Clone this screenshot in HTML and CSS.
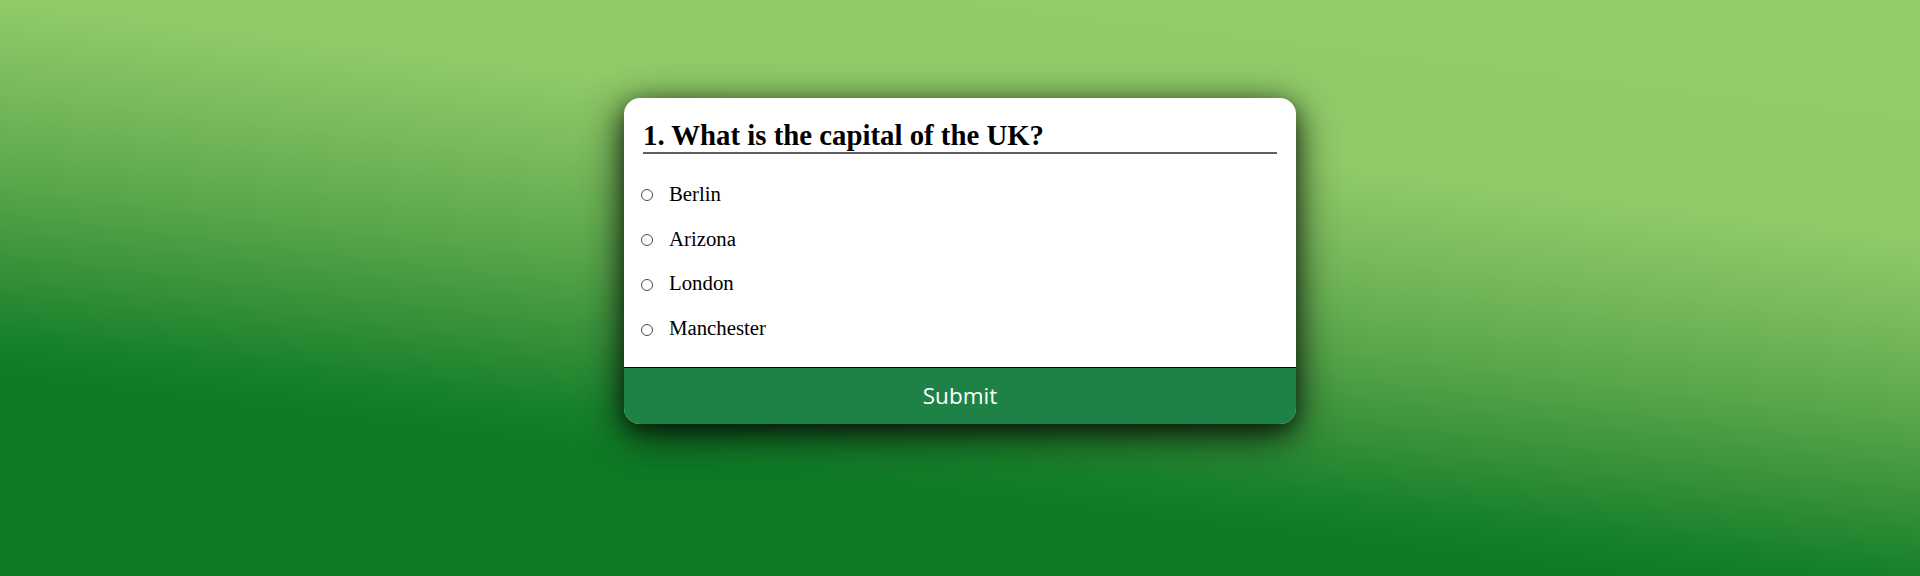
FILE: index.html
```html
<!DOCTYPE html>
<html lang="en">
<head>
<meta charset="utf-8">
<title>Quiz</title>
<link rel="stylesheet" href="styles.css">
</head>
<body>
<div class="quiz">
  <div class="quiz-header">
    <h2 class="question">1. What is the capital of the UK?</h2>
    <ul class="answers">
      <li class="answer"><input type="radio" name="answer" id="a"><label for="a">Berlin</label></li>
      <li class="answer"><input type="radio" name="answer" id="b"><label for="b">Arizona</label></li>
      <li class="answer"><input type="radio" name="answer" id="c"><label for="c">London</label></li>
      <li class="answer"><input type="radio" name="answer" id="d"><label for="d">Manchester</label></li>
    </ul>
  </div>
  <button class="submit" type="button">Submit</button>
</div>
</body>
</html>
```

FILE: styles.css
```css
html, body {
  height: 100%;
}

body {
  margin: 0;
  overflow: hidden;
  font-family: "Liberation Serif", "Times New Roman", serif;
  background: linear-gradient(187deg,
    #92cd6a 0%,
    #90cb68 29%,
    #78ba5c 40%,
    #58a54a 52%,
    #338f38 63%,
    #16802a 71%,
    #0e7a24 76%,
    #0e7a24 100%);
}

.quiz {
  width: 672px;
  margin: 98px auto 0;
  background: #ffffff;
  border-radius: 16px;
  overflow: hidden;
  box-shadow: 0 10px 40px rgba(0, 0, 0, 0.85), 0 6px 18px rgba(0, 0, 0, 0.35);
}

.quiz-header {
  padding: 20.5px 19px 0;
}

.question {
  margin: 0;
  padding: 0;
  font-size: 28.8px;
  font-weight: bold;
  line-height: normal;
  color: #000;
  border-bottom: 2px solid #5e5e5e;
}

.answers {
  list-style: none;
  margin: 0;
  padding: 18px 0 16.5px;
}

.answer {
  display: flex;
  align-items: center;
  padding: 10.4px 0;
  font-size: 20.8px;
  line-height: normal;
}

.answer input {
  appearance: none;
  -webkit-appearance: none;
  box-sizing: border-box;
  width: 12px;
  height: 12px;
  margin: 3px 16px 0 -2px;
  padding: 0;
  border: 1px solid #4a4a4a;
  border-radius: 50%;
  background: #fff;
  flex: none;
}

.answer label {
  color: #000;
}

.submit {
  display: block;
  width: 100%;
  height: 56.5px;
  margin: 0;
  padding: 0;
  border: none;
  border-top: 1.5px solid #000;
  background: #1e8247;
  color: #ffffff;
  font-family: "Open Sans", "Noto Sans", sans-serif;
  font-size: 22.5px;
  cursor: pointer;
}
```
